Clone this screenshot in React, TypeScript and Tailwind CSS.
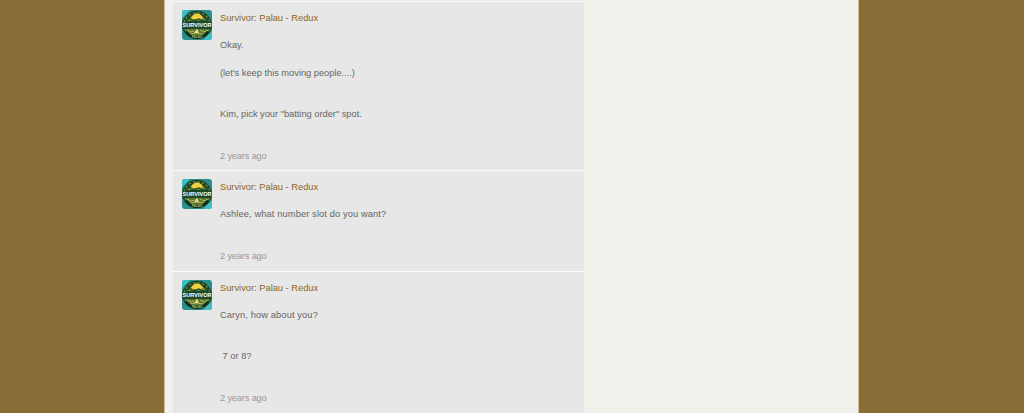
interface Line {
  text: string;
  tracking?: string;
}

interface Post {
  id: number;
  lines: Line[];
  height: string;
}

// An empty text keeps a blank line between paragraphs.
const blank: Line = { text: '' };

const posts: Post[] = [
  {
    id: 1,
    lines: [
      { text: 'Okay.' },
      blank,
      { text: "(let's keep this moving people....)", tracking: 'tracking-[-0.02px]' },
      blank,
      blank,
      { text: 'Kim, pick your "batting order" spot.', tracking: 'tracking-[-0.02px]' },
    ],
    height: 'h-[169px]',
  },
  {
    id: 2,
    lines: [{ text: 'Ashlee, what number slot do you want?', tracking: 'tracking-[0.11px]' }],
    height: 'h-[101px]',
  },
  {
    id: 3,
    lines: [
      { text: 'Caryn, how about you?', tracking: 'tracking-[0.11px]' },
      blank,
      blank,
      { text: ' 7 or 8?' },
    ],
    height: 'h-[150px]',
  },
];

function Avatar() {
  return (
    <svg viewBox="0 0 30 30" className="mt-2 h-[30px] w-[30px] shrink-0 rounded-[3px]">
      <rect width="30" height="30" fill="#2a8f8c" />
      <path d="M0 0h8L0 8ZM30 30h-9l9-9Z" fill="#3fc0c6" />
      <ellipse cx="15" cy="15" rx="14.8" ry="14.2" fill="#1b4427" />
      <ellipse cx="15" cy="14.5" rx="13" ry="11.8" fill="none" stroke="#7d8a38" strokeWidth="1.2" strokeDasharray="2.5 2" />
      <path d="M4 11Q8 8 10 6Q15 1 20 6Q22 8 26 11Z" fill="#7b8a2e" />
      <path d="M9 8Q11 3.5 15 3.5Q19 3.5 21 8L19 9H11Z" fill="#f2cf3f" />
      <path d="M3 10.5 8 8.5 11 11 17 9 21 11 27 10" fill="none" stroke="#24552a" strokeWidth="1.4" />
      <path d="M4 19H26Q23 26 15 25Q7 26 4 19Z" fill="#59772f" />
      <path d="M5 20l4 2 3-1M18 20l4 2 4-2M8 24l6-1 8 1" fill="none" stroke="#b5bb59" strokeWidth="1" />
      <path d="M12 23 15 18.5 17 23Z" fill="#ecd795" />
      <path d="M4 22Q9 28 15 27.5Q21 28 26 22" fill="none" stroke="#0d2c1c" strokeWidth="2.4" />
      <rect y="12.5" width="30" height="6" fill="#234a2a" />
      <text
        x="15"
        y="17.4"
        textAnchor="middle"
        textLength="29"
        lengthAdjust="spacingAndGlyphs"
        fontFamily="Liberation Sans, sans-serif"
        fontSize="5.4"
        fontWeight="700"
        fill="#ffffff"
      >
        SURVIVOR
      </text>
      <text
        x="15"
        y="28.2"
        textAnchor="middle"
        fontFamily="Liberation Sans, sans-serif"
        fontSize="3.2"
        fontWeight="700"
        fill="#a4b578"
      >
        PALAU
      </text>
    </svg>
  );
}

function PostItem({ post }: { post: Post }) {
  return (
    <li className={`flex gap-[8.5px] border-t border-[#fafafa] pl-[8.5px] ${post.height}`}>
      <Avatar />
      <div className="pt-[9.5px]">
        <h3 className="text-[#8f6620]">Survivor: Palau - Redux</h3>
        <div className="mt-[13.8px] whitespace-pre">
          {post.lines.map((line, index) => (
            <p key={index} className={`h-[13.8px] ${line.tracking ?? ''}`}>
              {line.text}
            </p>
          ))}
        </div>
        <p className="mt-[27.9px] tracking-[-0.18px] text-[#999999]">2 years ago</p>
      </div>
    </li>
  );
}

export default function App() {
  return (
    <div className="flex h-[413px] justify-center overflow-hidden bg-[#876e37] pr-px font-['Liberation_Sans',Arial,sans-serif] text-[9.3px] leading-[13.8px] text-[#666666]">
      <main className="w-[695px] border-x border-[#cbbd98] bg-[#f1f0ea] pl-2">
        <ul className="w-[411px] bg-[#e7e7e7] pt-px">
          {posts.map((post) => (
            <PostItem key={post.id} post={post} />
          ))}
        </ul>
      </main>
    </div>
  );
}
